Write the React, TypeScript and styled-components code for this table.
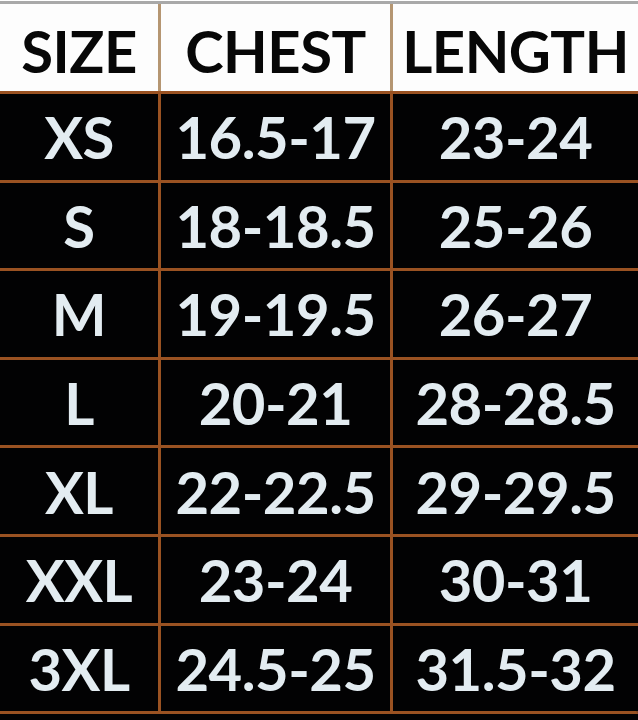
import React from 'react';
import styled, { createGlobalStyle } from 'styled-components';

const rows = [
  ['XS', '16.5-17', '23-24'],
  ['S', '18-18.5', '25-26'],
  ['M', '19-19.5', '26-27'],
  ['L', '20-21', '28-28.5'],
  ['XL', '22-22.5', '29-29.5'],
  ['XXL', '23-24', '30-31'],
  ['3XL', '24.5-25', '31.5-32'],
];

const GlobalStyle = createGlobalStyle`
  html, body {
    margin: 0;
    padding: 0;
    background: #020203;
  }
  body {
    width: 638px;
    height: 720px;
    overflow: hidden;
  }
`;

export default function App() {
  return (
    <>
      <GlobalStyle />
      <Page>
        <TopRule />
        <Table>
          <HeadCell>SIZE</HeadCell>
          <HeadCell $line>CHEST</HeadCell>
          <HeadCell $line>LENGTH</HeadCell>
          {rows.map((r) =>
            r.map((v, i) => (
              <Cell key={r[0] + i} $line={i > 0}>
                {v}
              </Cell>
            ))
          )}
        </Table>
      </Page>
    </>
  );
}

const Page = styled.div`
  width: 638px;
  height: 720px;
  display: flex;
  flex-direction: column;
  background: #020203;
  font-family: Lato, 'Open Sans', sans-serif;
  font-weight: 700;
`;

const TopRule = styled.div`
  height: 1px;
  background: #fff;
  border-bottom: 3px solid #a9a9a9;
`;

const Table = styled.div`
  display: grid;
  grid-template-columns: 158px 232px 248px;
  grid-template-rows: 87px repeat(7, 88.6px);
  border-bottom: 3px solid #9a5222;
  border-right: 2px solid #7a4420;
`;

const HeadCell = styled.div<{ $line?: boolean }>`
  display: flex;
  align-items: center;
  justify-content: center;
  padding-top: 6px;
  background: #fdfdfd;
  color: #070707;
  font-size: 58px;
  letter-spacing: -0.5px;
  border-left: ${(p) => (p.$line ? '3px solid #b59672' : 'none')};
`;

const Cell = styled.div<{ $line?: boolean }>`
  display: flex;
  align-items: center;
  justify-content: center;
  background: #020203;
  color: #e3ecf1;
  font-size: 58px;
  letter-spacing: -0.5px;
  border-top: 3px solid #9a5222;
  border-left: ${(p) => (p.$line ? '3px solid #9a5222' : 'none')};
`;
